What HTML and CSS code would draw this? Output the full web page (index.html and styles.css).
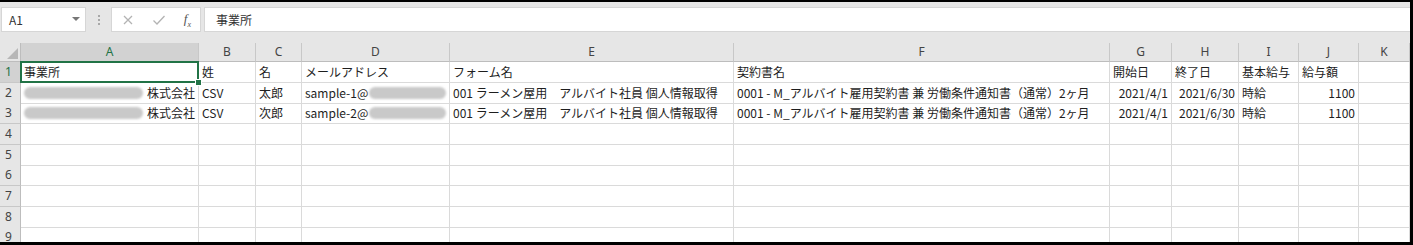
FILE: index.html
```html
<!DOCTYPE html>
<html lang="ja">
<head>
    <meta charset="UTF-8">
    <title>事業所 - Excel</title>
    <link rel="stylesheet" href="styles.css">
</head>
<body>
    <div class="window">
        <div class="formula-bar">
            <div class="name-box">
                <span>A1</span>
                <svg class="arrow" width="8" height="4" viewBox="0 0 8 4"><path d="M0 0h8L4 4z" fill="#777"/></svg>
            </div>
            <div class="grip"><i></i><i></i><i></i></div>
            <div class="fx-buttons">
                <svg width="12" height="12" viewBox="0 0 12 12"><path d="M2 2l8 8M10 2l-8 8" stroke="#b3b3b3" stroke-width="1.3"/></svg>
                <svg width="14" height="12" viewBox="0 0 14 12"><path d="M1.5 6.5l3.5 3.5 7.5-8" stroke="#b3b3b3" stroke-width="1.3" fill="none"/></svg>
                <span class="fx">f<sub>x</sub></span>
            </div>
            <div class="formula-input">事業所</div>
        </div>

        <div class="sheet">
            <div class="row head">
                <div class="corner"><svg width="11" height="11" viewBox="0 0 11 11"><path d="M11 0v11H0z" fill="#b7b7b7"/></svg></div>
                <div class="col-head active">A</div>
                <div class="col-head">B</div>
                <div class="col-head">C</div>
                <div class="col-head">D</div>
                <div class="col-head">E</div>
                <div class="col-head">F</div>
                <div class="col-head">G</div>
                <div class="col-head">H</div>
                <div class="col-head">I</div>
                <div class="col-head">J</div>
                <div class="col-head">K</div>
            </div>

            <div class="row">
                <div class="row-head active">1</div>
                <div class="cell selected">事業所<span class="handle"></span></div>
                <div class="cell">姓</div>
                <div class="cell">名</div>
                <div class="cell">メールアドレス</div>
                <div class="cell">フォーム名</div>
                <div class="cell">契約書名</div>
                <div class="cell">開始日</div>
                <div class="cell">終了日</div>
                <div class="cell">基本給与</div>
                <div class="cell">給与額</div>
                <div class="cell"></div>
            </div>

            <div class="row">
                <div class="row-head">2</div>
                <div class="cell"><span class="blur company"></span><span class="tail">株式会社</span></div>
                <div class="cell">CSV</div>
                <div class="cell">太郎</div>
                <div class="cell">sample-1@<span class="blur mail"></span></div>
                <div class="cell">001 ラーメン屋用　アルバイト社員 個人情報取得</div>
                <div class="cell">0001 - M_アルバイト雇用契約書 兼 労働条件通知書（通常）2ヶ月</div>
                <div class="cell num">2021/4/1</div>
                <div class="cell num">2021/6/30</div>
                <div class="cell">時給</div>
                <div class="cell num">1100</div>
                <div class="cell"></div>
            </div>

            <div class="row">
                <div class="row-head">3</div>
                <div class="cell"><span class="blur company"></span><span class="tail">株式会社</span></div>
                <div class="cell">CSV</div>
                <div class="cell">次郎</div>
                <div class="cell">sample-2@<span class="blur mail"></span></div>
                <div class="cell">001 ラーメン屋用　アルバイト社員 個人情報取得</div>
                <div class="cell">0001 - M_アルバイト雇用契約書 兼 労働条件通知書（通常）2ヶ月</div>
                <div class="cell num">2021/4/1</div>
                <div class="cell num">2021/6/30</div>
                <div class="cell">時給</div>
                <div class="cell num">1100</div>
                <div class="cell"></div>
            </div>

            <!-- 空の行 -->
            <div class="row empty"><div class="row-head">4</div><div class="cell"></div><div class="cell"></div><div class="cell"></div><div class="cell"></div><div class="cell"></div><div class="cell"></div><div class="cell"></div><div class="cell"></div><div class="cell"></div><div class="cell"></div><div class="cell"></div></div>
            <div class="row empty"><div class="row-head">5</div><div class="cell"></div><div class="cell"></div><div class="cell"></div><div class="cell"></div><div class="cell"></div><div class="cell"></div><div class="cell"></div><div class="cell"></div><div class="cell"></div><div class="cell"></div><div class="cell"></div></div>
            <div class="row empty"><div class="row-head">6</div><div class="cell"></div><div class="cell"></div><div class="cell"></div><div class="cell"></div><div class="cell"></div><div class="cell"></div><div class="cell"></div><div class="cell"></div><div class="cell"></div><div class="cell"></div><div class="cell"></div></div>
            <div class="row empty"><div class="row-head">7</div><div class="cell"></div><div class="cell"></div><div class="cell"></div><div class="cell"></div><div class="cell"></div><div class="cell"></div><div class="cell"></div><div class="cell"></div><div class="cell"></div><div class="cell"></div><div class="cell"></div></div>
            <div class="row empty"><div class="row-head">8</div><div class="cell"></div><div class="cell"></div><div class="cell"></div><div class="cell"></div><div class="cell"></div><div class="cell"></div><div class="cell"></div><div class="cell"></div><div class="cell"></div><div class="cell"></div><div class="cell"></div></div>
            <div class="row empty"><div class="row-head">9</div><div class="cell"></div><div class="cell"></div><div class="cell"></div><div class="cell"></div><div class="cell"></div><div class="cell"></div><div class="cell"></div><div class="cell"></div><div class="cell"></div><div class="cell"></div><div class="cell"></div></div>
        </div>
    </div>
</body>
</html>
```

FILE: styles.css
```css
body {
    margin: 0;
    background: #000;
    font-family: "Noto Sans CJK JP", "Noto Sans", sans-serif;
    color: #1e1e1e;
}
.window {
    width: 1410px;
    height: 240px;
    border-top: 2px solid #000;
    border-right: 3px solid #000;
    border-bottom: 3px solid #000;
    background: #e6e6e6;
    overflow: hidden;
}
.formula-bar {
    height: 39px;
    box-sizing: border-box;
    padding: 5px 0 0 1px;
    display: flex;
    align-items: flex-start;
}
.name-box {
    width: 85px;
    height: 25px;
    box-sizing: border-box;
    background: #fff;
    border: 1px solid #d6d6d6;
    display: flex;
    align-items: center;
    justify-content: space-between;
    padding: 0 5px 0 7px;
    font-size: 12px;
    color: #333;
}
.name-box .arrow {
    margin-bottom: 1px;
}
.grip {
    width: 25px;
    height: 25px;
    display: flex;
    flex-direction: column;
    align-items: center;
    justify-content: center;
    gap: 2px;
}
.grip i {
    width: 2px;
    height: 2px;
    background: #a8a8a8;
}
.fx-buttons {
    width: 90px;
    height: 25px;
    box-sizing: border-box;
    background: #fff;
    border: 1px solid #d6d6d6;
    display: flex;
    align-items: center;
    justify-content: space-between;
    padding: 0 9px 0 10px;
}
.fx {
    font-family: "Liberation Serif", serif;
    font-style: italic;
    font-size: 13px;
    color: #555;
}
.fx sub {
    font-size: 8px;
}
.formula-input {
    flex: 1;
    height: 25px;
    box-sizing: border-box;
    margin-left: 3px;
    background: #fff;
    border: 1px solid #d6d6d6;
    border-right: none;
    padding: 0 11px;
    font-size: 12px;
    line-height: 23px;
    color: #333;
}
.sheet {
    background: #fff;
    height: 201px;
    margin-top: 2px;
}
.row {
    display: grid;
    grid-template-columns: 21px 178px 57px 46px 148px 284px 376px 62px 67px 60px 60px 51px;
    height: 20.67px;
}
.row.head {
    height: 19px;
    background: #e6e6e6;
}
.corner {
    border-right: 1px solid #bdbdbd;
    border-bottom: 1px solid #bdbdbd;
    display: flex;
    align-items: flex-end;
    justify-content: flex-end;
    padding: 0 2px 2px 0;
}
.col-head {
    border-right: 1px solid #c8c8c8;
    border-bottom: 1px solid #bdbdbd;
    font-family: "Noto Sans", sans-serif;
    font-size: 12px;
    line-height: 18px;
    text-align: center;
    color: #444;
}
.col-head.active {
    background: #d2d2d2;
    color: #217346;
}
.row-head {
    background: #e6e6e6;
    border-right: 1px solid #bdbdbd;
    border-bottom: 1px solid #c8c8c8;
    font-family: "Noto Sans", sans-serif;
    font-size: 12px;
    line-height: 20px;
    padding-left: 5px;
    color: #444;
}
.row-head.active {
    background: #d2d2d2;
    color: #217346;
}
.row > * {
    box-sizing: border-box;
}
.cell {
    border-right: 1px solid #dadada;
    border-bottom: 1px solid #dadada;
    padding: 0 3px;
    font-size: 12px;
    line-height: 20px;
    white-space: nowrap;
    overflow: hidden;
    display: flex;
    align-items: center;
}
.cell.num {
    justify-content: flex-end;
}
.cell.selected {
    position: relative;
    overflow: visible;
}
.cell.selected::after {
    content: "";
    position: absolute;
    left: -1px;
    top: -1px;
    right: -1px;
    bottom: -1px;
    border: 2px solid #217346;
}
.handle {
    position: absolute;
    right: -4px;
    bottom: -4px;
    width: 5px;
    height: 5px;
    background: #217346;
    border: 1px solid #fff;
    z-index: 1;
}
.blur {
    display: inline-block;
    height: 12px;
    background: #c9c9c9;
    border-radius: 6px;
    filter: blur(1px);
}
.blur.company {
    width: 120px;
}
.tail {
    margin-left: 4px;
}
.blur.mail {
    width: 78px;
    margin-left: 1px;
}
```
